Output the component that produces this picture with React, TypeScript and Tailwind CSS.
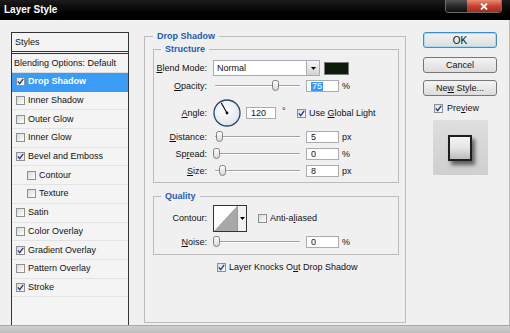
import React from "react";

const Check = ({ on }: { on?: boolean }) => (
  <span className="w-[9px] h-[9px] shrink-0 border border-[#8e8f8f] bg-gradient-to-br from-[#d9d9d9] to-white flex items-center justify-center">
    {on && (
      <svg width="7" height="7" viewBox="0 0 7 7">
        <path d="M0.8 3.4 L2.7 5.6 L6.2 0.8" stroke="#1f3d98" strokeWidth="1.4" fill="none" />
      </svg>
    )}
  </span>
);

const Slider = ({ pos }: { pos: number }) => (
  <div className="relative w-[87px] h-[12px]">
    <div className="absolute left-[2px] right-0 top-[5px] h-[2px] border-t border-[#a3a3a3] border-b border-b-white" />
    <div
      className="absolute top-0 w-[7px] h-[11px] rounded-t-[3px] rounded-b-[4px] border border-[#7f7f7f] bg-gradient-to-b from-white to-[#d8d8d8]"
      style={{ left: pos }}
    />
  </div>
);

const Field = ({ value, selected, w = "w-[33px]" }: { value: string; selected?: boolean; w?: string }) => (
  <div className={`${w} h-[12px] bg-white border border-[#a9acb2] flex items-center pl-[4px]`}>
    {selected ? <span className="bg-[#3399ff] text-white leading-[9px] px-[1px]">{value}</span> : <span>{value}</span>}
  </div>
);

const Label = ({ pre, u, post }: { pre: string; u: string; post: string }) => (
  <span className="w-[50px] shrink-0 flex justify-end whitespace-nowrap">
    <span>
      {pre}
      <span className="underline">{u}</span>
      {post}
    </span>
  </span>
);

const SliderRow = ({
  label,
  pos,
  value,
  unit,
  cls,
  selected,
}: {
  label: React.ReactNode;
  pos: number;
  value: string;
  unit: string;
  cls: string;
  selected?: boolean;
}) => (
  <div className={`flex items-center ${cls}`}>
    {label}
    <div className="ml-[6px]">
      <Slider pos={pos} />
    </div>
    <div className="ml-[6px]">
      <Field value={value} selected={selected} />
    </div>
    <span className="ml-[3px]">{unit}</span>
  </div>
);

const styleRows = [
  { name: "Drop Shadow", on: true, active: true },
  { name: "Inner Shadow" },
  { name: "Outer Glow" },
  { name: "Inner Glow" },
  { name: "Bevel and Emboss", on: true },
  { name: "Contour", sub: true },
  { name: "Texture", sub: true },
  { name: "Satin" },
  { name: "Color Overlay" },
  { name: "Gradient Overlay", on: true },
  { name: "Pattern Overlay" },
  { name: "Stroke", on: true },
];

const Btn = ({ children, focus }: { children: React.ReactNode; focus?: boolean }) => (
  <div
    className={`h-[16px] rounded-[3px] border flex items-center justify-center bg-gradient-to-b from-[#f4f4f4] to-[#dcdcdc] ${
      focus ? "border-[#3c8fd0] shadow-[inset_0_0_0_1px_#a8dcf5]" : "border-[#777]"
    }`}
  >
    {children}
  </div>
);

export default function App() {
  return (
    <div className="w-[510px] h-[333px] flex flex-col overflow-hidden bg-[#f0f0f0] text-[9px] leading-[11px] text-[#111] font-['Liberation_Sans',Arial,sans-serif]">
      {/* title bar */}
      <div className="h-[20px] shrink-0 flex justify-between bg-gradient-to-b from-[#1c1c1c] via-[#070707] to-black">
        <span className="ml-[4px] mt-[4px] text-white font-bold text-[10px] leading-[12px]">Layer Style</span>
        <div className="flex self-start mr-[8px] h-[13px] rounded-b-[4px] overflow-hidden border border-t-0 border-[#6a6a6a]">
          <div className="w-[21px] bg-gradient-to-b from-[#555] via-[#2a2a2a] to-[#121212]" />
          <div className="w-[34px] bg-gradient-to-b from-[#ea8a76] via-[#c8422e] to-[#a82c1a] flex items-center justify-center">
            <svg width="8" height="7" viewBox="0 0 8 7">
              <path d="M1 0.5 L7 6.5 M7 0.5 L1 6.5" stroke="#fff" strokeWidth="1.8" />
            </svg>
          </div>
        </div>
      </div>

      {/* body */}
      <div className="flex-1 flex border-r border-[#b8b8b8]">
        {/* styles list */}
        <div className="ml-[11px] mt-[12px] w-[118px] h-[293px] border border-b-0 border-[#343434] bg-[#f4f4f4] flex flex-col">
          <div className="h-[21px] shrink-0 border-b-[3px] border-double border-[#343434] flex items-center pl-[3px]">Styles</div>
          <div className="h-[19px] shrink-0 border-b border-[#dcdcdc] flex items-center pl-[2px] whitespace-nowrap">
            Blending Options: Default
          </div>
          {styleRows.map((r) => (
            <div
              key={r.name}
              className={`h-[18.7px] shrink-0 flex items-center border-b ${
                r.active ? "bg-[#3a9cf4] text-white font-bold border-[#3a9cf4]" : "border-[#e3e3e3]"
              } ${r.sub ? "pl-[15px]" : "pl-[4px]"}`}
            >
              <Check on={r.on} />
              <span className="ml-[3px]">{r.name}</span>
            </div>
          ))}
        </div>

        {/* drop shadow group */}
        <fieldset className="ml-[15px] mt-[10px] w-[262px] h-[293px] border border-[#bcbcbc] pl-[8px] pr-[6px]">
          <legend className="px-[4px] h-[12px] leading-[12px] font-bold text-[#1f5cb4]">Drop Shadow</legend>

          <fieldset className="mt-[1px] border border-[#bcbcbc] pl-[3px] pt-[4px] pb-[5px]">
            <legend className="ml-[4px] px-[4px] h-[12px] leading-[12px] font-bold text-[#1f5cb4]">Structure</legend>

            <div className="h-[18px] flex items-center">
              <Label pre="" u="B" post="lend Mode:" />
              <div className="ml-[6px] w-[107px] h-[16px] bg-white border border-[#a5acb5] flex items-center">
                <span className="flex-1 pl-[3px]">Normal</span>
                <span className="w-[13px] h-full border-l border-[#a5acb5] bg-gradient-to-b from-[#f6f6f6] to-[#d3d3d3] flex items-center justify-center">
                  <svg width="5" height="3" viewBox="0 0 5 3">
                    <path d="M0 0 H5 L2.5 3 Z" fill="#000" />
                  </svg>
                </span>
              </div>
              <div className="ml-[4px] w-[25px] h-[13px] bg-[#0b1a09] border border-[#7a7a7a]" />
            </div>

            <SliderRow label={<Label pre="" u="O" post="pacity:" />} pos={59} value="75" unit="%" cls="h-[18px]" selected />

            <div className="h-[36px] flex items-center">
              <Label pre="" u="A" post="ngle:" />
              <svg className="ml-[6px]" width="28" height="28" viewBox="0 0 28 28">
                <defs>
                  <radialGradient id="dial" cx="40%" cy="35%" r="70%">
                    <stop offset="0" stopColor="#ffffff" />
                    <stop offset="1" stopColor="#dfe4ea" />
                  </radialGradient>
                </defs>
                <circle cx="14" cy="14" r="13" fill="url(#dial)" stroke="#27456f" strokeWidth="1.3" />
                <line x1="14" y1="14" x2="8.3" y2="4" stroke="#111" strokeWidth="1.2" />
                <circle cx="14" cy="14" r="1.4" fill="#111" />
              </svg>
              <div className="ml-[5px]">
                <Field value="120" w="w-[30px]" />
              </div>
              <span className="ml-[6px] w-[8px] self-start mt-[11px]">°</span>
              <div className="ml-[7px]">
                <Check on />
              </div>
              <span className="ml-[3px]">
                Use <span className="underline">G</span>lobal Light
              </span>
            </div>

            <SliderRow label={<Label pre="" u="D" post="istance:" />} pos={2.5} value="5" unit="px" cls="h-[12px]" />
            <SliderRow label={<Label pre="Sp" u="r" post="ead:" />} pos={0} value="0" unit="%" cls="h-[12px] mt-[5px]" />
            <SliderRow label={<Label pre="" u="S" post="ize:" />} pos={5.5} value="8" unit="px" cls="h-[12px] mt-[5px]" />
          </fieldset>

          <fieldset className="mt-[7px] border border-[#bcbcbc] pl-[3px] pt-[3px] pb-[6px]">
            <legend className="ml-[4px] px-[4px] h-[12px] leading-[12px] font-bold text-[#1f5cb4]">Quality</legend>

            <div className="h-[27px] flex items-center">
              <Label pre="" u="" post="Contour:" />
              <div className="ml-[6px] w-[34px] h-[27px] border border-[#333] bg-white flex">
                <svg className="flex-1 h-full" viewBox="0 0 24 25" preserveAspectRatio="none">
                  <path d="M0 25 L24 0 L24 25 Z" fill="#a8a8a8" />
                </svg>
                <div className="w-[9px] border-l border-[#9a9a9a] bg-[#f2f2f2] flex items-center justify-center">
                  <svg width="5" height="3" viewBox="0 0 5 3">
                    <path d="M0 0 H5 L2.5 3 Z" fill="#000" />
                  </svg>
                </div>
              </div>
              <div className="ml-[11px]">
                <Check />
              </div>
              <span className="ml-[3px]">
                Anti-a<span className="underline">l</span>iased
              </span>
            </div>

            <SliderRow label={<Label pre="" u="N" post="oise:" />} pos={0} value="0" unit="%" cls="h-[12px] mt-[4px]" />
          </fieldset>

          <div className="mt-[6px] h-[12px] ml-[64px] flex items-center">
            <Check on />
            <span className="ml-[3px]">
              Layer Knocks O<span className="underline">u</span>t Drop Shadow
            </span>
          </div>
        </fieldset>

        {/* buttons */}
        <div className="ml-[17px] mt-[12px] w-[74px] flex flex-col">
          <Btn focus>
            <span className="text-[10px]">OK</span>
          </Btn>
          <div className="mt-[9px]">
            <Btn>Cancel</Btn>
          </div>
          <div className="mt-[7px]">
            <Btn>
              <span>
                Ne<span className="underline">w</span> Style...
              </span>
            </Btn>
          </div>
          <div className="mt-[7px] h-[10px] pl-[11px] flex items-center">
            <Check on />
            <span className="ml-[4px]">
              Pre<span className="underline">v</span>iew
            </span>
          </div>
          <div className="mt-[7px] self-center w-[55px] h-[55px] bg-gradient-to-b from-[#dedede] to-[#cfcfcf] flex items-center justify-center">
            <div className="w-[24px] h-[26px] border-2 border-[#1e1e1e] bg-gradient-to-b from-[#f5f5f5] via-[#e4e4e4] to-[#bdbdbd] shadow-[3px_4px_4px_rgba(0,0,0,0.55)]" />
          </div>
        </div>
      </div>

      {/* bottom strip */}
      <div className="h-[8px] shrink-0 bg-gradient-to-b from-[#cfcfcf] to-[#bdbdbd] border-t border-[#a8a8a8]" />
    </div>
  );
}
